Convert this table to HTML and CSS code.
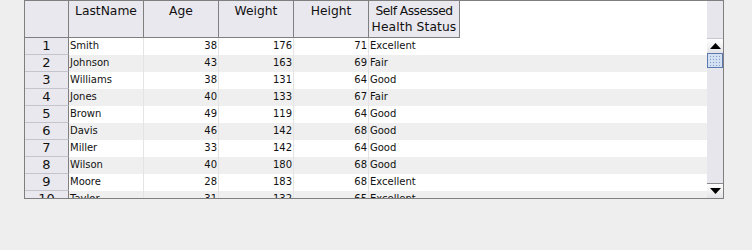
FILE: index.html
```html
<!DOCTYPE html>
<html>
<head>
<meta charset="utf-8">
<link rel="stylesheet" href="styles.css">
</head>
<body>
<div class="panel">
  <div class="view">
    <div class="row head">
      <div class="rh hc"></div>
      <div class="hc">LastName</div>
      <div class="hc">Age</div>
      <div class="hc">Weight</div>
      <div class="hc">Height</div>
      <div class="hc wide"><span class="l1">Self Assessed</span><span class="l2">Health Status</span></div>
    </div>
    <div class="row"><div class="rh">1</div><div class="c">Smith</div><div class="c n">38</div><div class="c n">176</div><div class="c n">71</div><div class="c s">Excellent</div></div>
    <div class="row alt"><div class="rh">2</div><div class="c">Johnson</div><div class="c n">43</div><div class="c n">163</div><div class="c n">69</div><div class="c s">Fair</div></div>
    <div class="row"><div class="rh">3</div><div class="c">Williams</div><div class="c n">38</div><div class="c n">131</div><div class="c n">64</div><div class="c s">Good</div></div>
    <div class="row alt"><div class="rh">4</div><div class="c">Jones</div><div class="c n">40</div><div class="c n">133</div><div class="c n">67</div><div class="c s">Fair</div></div>
    <div class="row"><div class="rh">5</div><div class="c">Brown</div><div class="c n">49</div><div class="c n">119</div><div class="c n">64</div><div class="c s">Good</div></div>
    <div class="row alt"><div class="rh">6</div><div class="c">Davis</div><div class="c n">46</div><div class="c n">142</div><div class="c n">68</div><div class="c s">Good</div></div>
    <div class="row"><div class="rh">7</div><div class="c">Miller</div><div class="c n">33</div><div class="c n">142</div><div class="c n">64</div><div class="c s">Good</div></div>
    <div class="row alt"><div class="rh">8</div><div class="c">Wilson</div><div class="c n">40</div><div class="c n">180</div><div class="c n">68</div><div class="c s">Good</div></div>
    <div class="row"><div class="rh">9</div><div class="c">Moore</div><div class="c n">28</div><div class="c n">183</div><div class="c n">68</div><div class="c s">Excellent</div></div>
    <div class="row alt"><div class="rh">10</div><div class="c">Taylor</div><div class="c n">31</div><div class="c n">132</div><div class="c n">65</div><div class="c s">Excellent</div></div>
  </div>
  <div class="scroll">
    <div class="corner"></div>
    <div class="btn"><svg width="11" height="6" viewBox="0 0 11 6"><polygon points="5.5,0 11,6 0,6" fill="#000"/></svg></div>
    <div class="thumb"></div>
    <div class="track"></div>
    <div class="btn down"><svg width="11" height="6" viewBox="0 0 11 6"><polygon points="0,0 11,0 5.5,6" fill="#000"/></svg></div>
  </div>
</div>
</body>
</html>
```
FILE: styles.css
```css
html, body {
  margin: 0;
  padding: 0;
  background: #eeeeee;
  font-family: "DejaVu Sans", sans-serif;
}
.panel {
  margin-left: 24px;
  width: 700px;
  height: 199px;
  box-sizing: border-box;
  border: 1px solid #7f7f7f;
  background: #ffffff;
  display: flex;
  overflow: hidden;
}
.view {
  width: 682px;
  overflow: hidden;
  display: flex;
  flex-direction: column;
  background: #ffffff;
}
.row {
  display: grid;
  grid-template-columns: 44px 75px 75px 75px 75px 91px;
  height: 17px;
  flex: none;
  background: #ffffff;
}
.row.alt { background: #efefef; }
.row.head {
  height: 37px;
  background: transparent;
}
.hc {
  box-sizing: border-box;
  background: #e9e8ee;
  border-right: 1px solid #7f7f7f;
  border-bottom: 1px solid #7f7f7f;
  font-size: 12.3px;
  line-height: 16px;
  padding-top: 2px;
  text-align: center;
  color: #111;
  white-space: nowrap;
}
.hc.wide {
  display: flex;
  flex-direction: column;
  align-items: center;
  padding-top: 2px;
}
.l1 { letter-spacing: -0.55px; }
.l2 { letter-spacing: 0.1px; }
.rh {
  box-sizing: border-box;
  background: #e9e8ee;
  border-right: 1px solid #7f7f7f;
  border-bottom: 1px solid #c4c4cc;
  font-size: 13px;
  line-height: 16px;
  text-align: center;
  color: #111;
}
.row.head .rh { border-bottom: 1px solid #7f7f7f; }
.c {
  box-sizing: border-box;
  border-right: 1px solid #e4e4e4;
  font-size: 10px;
  line-height: 16px;
  padding: 0 1px;
  color: #111;
  white-space: nowrap;
  overflow: hidden;
}
.c.n { text-align: right; }
.c.s { border-right: none; }
.scroll {
  width: 16px;
  display: flex;
  flex-direction: column;
  background: #e6e6ec;
}
.corner { height: 37px; flex: none; }
.btn {
  height: 15px;
  flex: none;
  box-sizing: border-box;
  background: linear-gradient(#ffffff, #e4e4e8);
  border-top: 1px solid #c8c8d0;
  display: flex;
  align-items: center;
  justify-content: center;
}
.btn.down {
  border-top: 1px solid #8a8a8a;
}
.thumb {
  height: 15px;
  flex: none;
  box-sizing: border-box;
  border: 1px solid #5a7ab0;
  background-color: #d3e0f2;
  background-image: radial-gradient(circle, #7f9cc8 0.7px, transparent 1px);
  background-size: 3px 3px;
  background-position: 1px 1px;
}
.track { flex: 1; }
```
